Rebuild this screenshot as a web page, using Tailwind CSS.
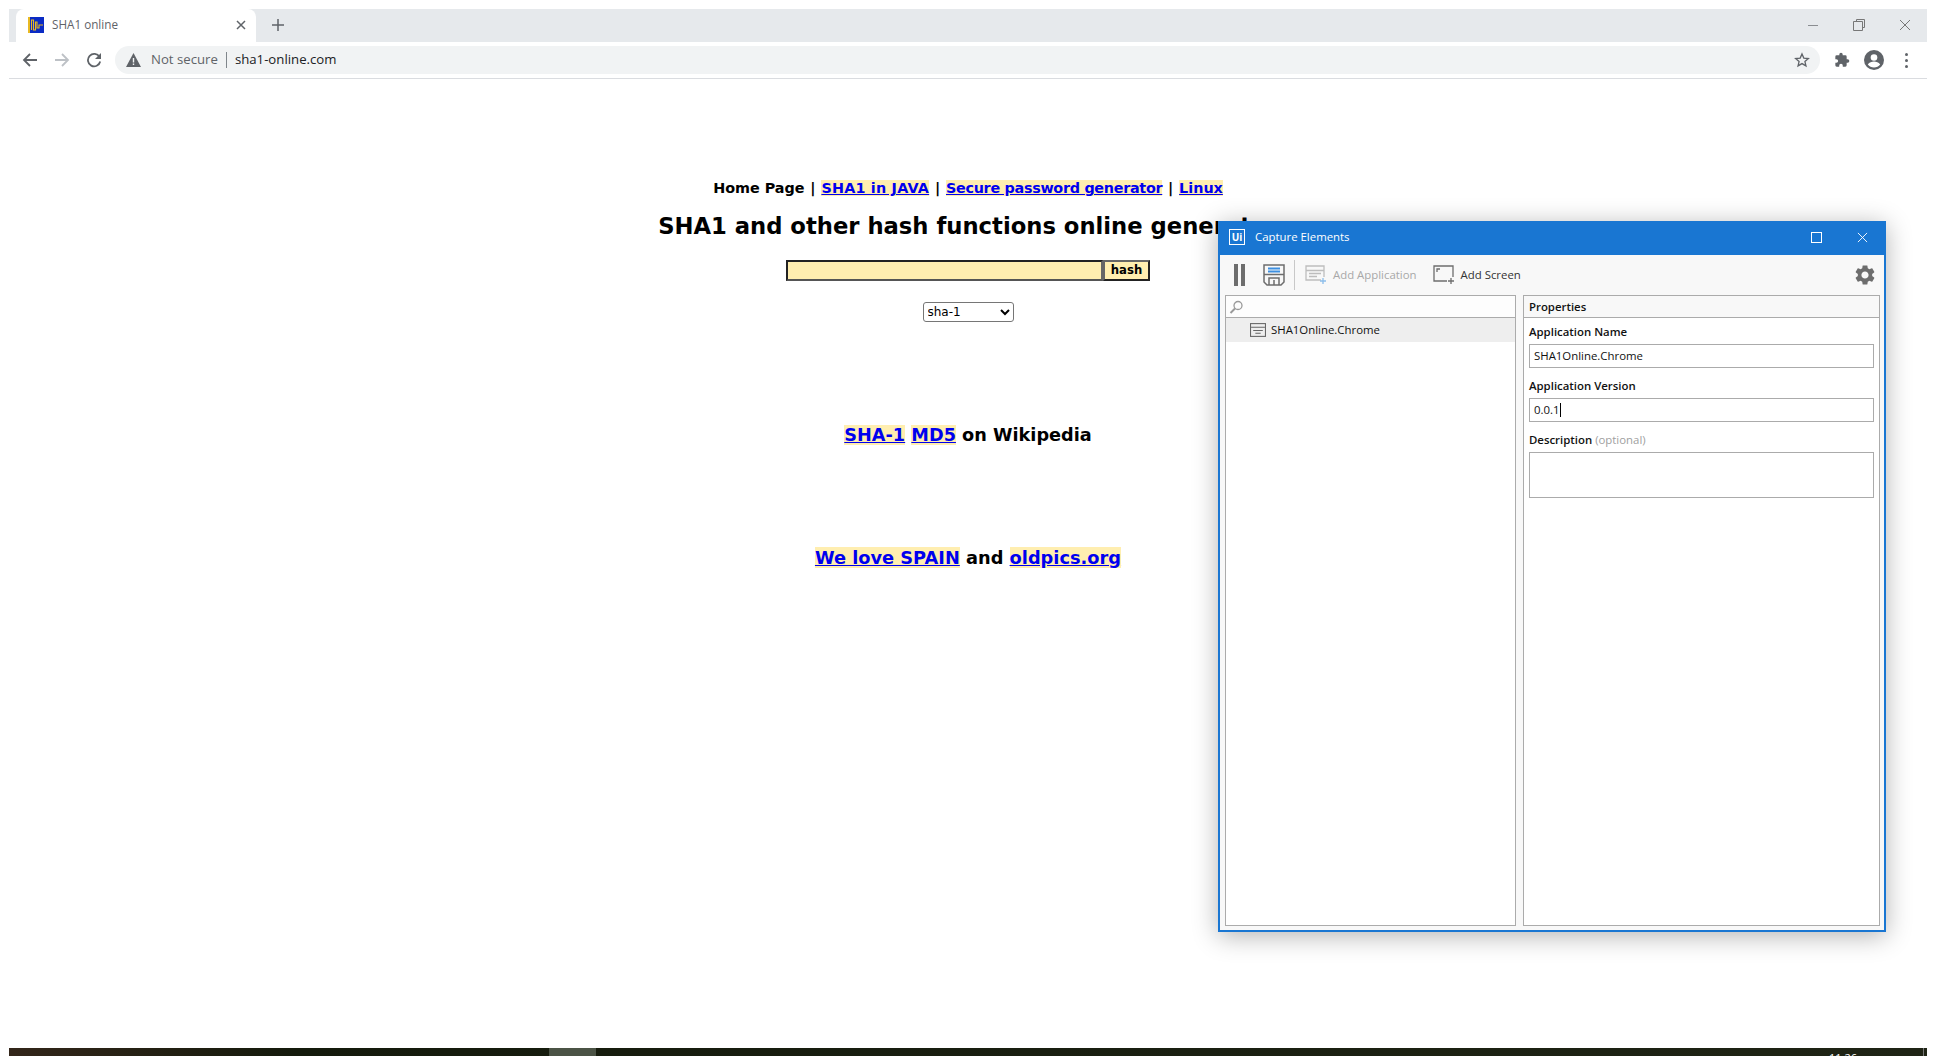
<!DOCTYPE html>
<html lang="en">

<head>
    <meta charset="UTF-8">
    <title>SHA1 online</title>
    <script src="https://cdn.jsdelivr.net/npm/@tailwindcss/browser@4"></script>
</head>

<body class="bg-white overflow-hidden">
    <div class="relative w-[1936px] h-[1056px] overflow-hidden bg-white px-[9px] pt-[9px] flex flex-col">

        <!-- browser tab strip -->
        <div class="h-[33px] shrink-0 bg-[#e6e9ec] flex items-end font-['Open_Sans',sans-serif] text-[11.700px]">
            <div class="ml-[7px] w-[240px] h-[33px] bg-white rounded-t-[8px] flex items-center pl-[12px] pr-[9px] pb-[1px]">
                <svg width="16" height="16" viewBox="0 0 16 16" class="shrink-0">
                    <rect width="16" height="16" fill="#0b2bc4" />
                    <rect width="2" height="16" fill="#e8b923" />
                    <path d="M3.500 13V3h2v10h2V5h1.500v6H11V8h4" fill="none" stroke="#e8b923" stroke-width="1.100" />
                </svg>
                <span class="ml-[8px] text-[#5f6368]">SHA1 online</span>
                <svg width="10" height="10" viewBox="0 0 10 10" class="ml-auto mr-[1px]">
                    <path d="M1 1l8 8M9 1l-8 8" stroke="#5f6368" stroke-width="1.500" />
                </svg>
            </div>
            <svg width="12" height="12" viewBox="0 0 12 12" class="ml-[16px] mb-[11px]">
                <path d="M6 0v12M0 6h12" stroke="#5f6368" stroke-width="1.500" />
            </svg>
            <div class="ml-auto h-[33px] flex items-center pb-[1px]">
                <svg width="12" height="12" viewBox="0 0 12 12"><path d="M1 6.500h10" stroke="#8a8d91" /></svg>
                <svg width="12" height="12" viewBox="0 0 12 12" class="ml-[34px]">
                    <path d="M3.500 2.500V.5h8v8h-2M.5 2.500h9v9h-9z" fill="none" stroke="#777" />
                </svg>
                <svg width="12" height="12" viewBox="0 0 12 12" class="ml-[34px] mr-[16px]">
                    <path d="M1 1l10 10M11 1L1 11" stroke="#777" />
                </svg>
            </div>
        </div>

        <!-- browser toolbar -->
        <div class="h-[37px] shrink-0 bg-white border-b border-[#dadce0] flex items-center font-['Open_Sans',sans-serif] text-[13.200px]">
            <svg width="16" height="16" viewBox="0 0 16 16" class="ml-[13px]">
                <path d="M15 8H2M8 2L2 8l6 6" fill="none" stroke="#5f6368" stroke-width="1.800" />
            </svg>
            <svg width="16" height="16" viewBox="0 0 16 16" class="ml-[16px]">
                <path d="M1 8h13M8 2l6 6-6 6" fill="none" stroke="#bdc1c6" stroke-width="1.800" />
            </svg>
            <svg width="16" height="16" viewBox="0 0 16 16" class="ml-[16px]">
                <path d="M13.500 5A6.200 6.200 0 1 0 14.200 9.500" fill="none" stroke="#5f6368" stroke-width="1.800" />
                <path d="M15 1v6H9z" fill="#5f6368" />
            </svg>
            <div class="ml-[13px] w-[1705px] h-[28px] bg-[#f1f3f4] rounded-full flex items-center pl-[11px]">
                <svg width="15" height="14" viewBox="0 0 15 14">
                    <path d="M7.500 0L15 14H0z" fill="#5f6368" />
                    <path d="M6.800 5h1.400v4.500H6.800zM6.800 10.500h1.400V12H6.800z" fill="#f1f3f4" />
                </svg>
                <span class="ml-[10px] text-[#5f6368]">Not secure</span>
                <span class="ml-[8px] w-px h-[16px] bg-[#80868b]"></span>
                <span class="ml-[8px] text-[#202124]">sha1-online.com</span>
                <svg width="16" height="16" viewBox="0 0 24 24" class="ml-auto mr-[10px]">
                    <path d="M12 3l2.700 6.200 6.800.6-5.100 4.500 1.500 6.600L12 17.400l-5.900 3.500 1.500-6.600-5.100-4.500 6.800-.6z" fill="none" stroke="#5f6368" stroke-width="2" />
                </svg>
            </div>
            <svg width="16" height="16" viewBox="0 0 24 24" class="ml-[14px]">
                <path d="M20.500 11H19V7a2 2 0 0 0-2-2h-4V3.500a2.500 2.500 0 0 0-5 0V5H4a2 2 0 0 0-2 2v3.800h1.500a2.700 2.700 0 0 1 0 5.400H2V20a2 2 0 0 0 2 2h3.800v-1.500a2.700 2.700 0 0 1 5.400 0V22H17a2 2 0 0 0 2-2v-4h1.500a2.500 2.500 0 0 0 0-5z" fill="#5f6368" />
            </svg>
            <svg width="20" height="20" viewBox="0 0 20 20" class="ml-[14px]">
                <circle cx="10" cy="10" r="10" fill="#5f6368" />
                <circle cx="10" cy="7.500" r="3.300" fill="#fff" />
                <path d="M3.800 14.500c1.500-2.300 4-3 6.200-3s4.700.7 6.200 3c-1.500 2-3.700 3-6.200 3s-4.700-1-6.200-3z" fill="#fff" />
            </svg>
            <div class="ml-[21px] flex flex-col gap-[3px]">
                <span class="w-[3px] h-[3px] bg-[#5f6368] rounded-full"></span>
                <span class="w-[3px] h-[3px] bg-[#5f6368] rounded-full"></span>
                <span class="w-[3px] h-[3px] bg-[#5f6368] rounded-full"></span>
            </div>
        </div>

        <!-- page content -->
        <main class="flex-1 flex flex-col items-center pt-[99px] font-['DejaVu_Sans',sans-serif] font-bold text-black">
            <p class="text-[14.360px] leading-[20px]">Home Page <span class="mx-[0.8px]">|</span> <a href="#" class="bg-[#ffeeb0] text-[#0000ee] underline tracking-[0.2px]">SHA1 in JAVA</a> <span class="mx-[0.8px]">|</span> <a href="#" class="bg-[#ffeeb0] text-[#0000ee] underline tracking-[-0.3px]">Secure password generator</a> <span class="mx-[0.8px]">|</span> <a href="#" class="bg-[#ffeeb0] text-[#0000ee] underline">Linux</a></p>
            <h1 class="mt-[13px] text-[22.700px] leading-[30px] font-bold">SHA1 and other hash functions online generator</h1>
            <form class="mt-[19px] flex h-[21px]">
                <input type="text" class="w-[317px] h-[21px] bg-[#ffeeb0] border-2 border-t-[#222] border-l-[#222] border-r-[#666] border-b-[#555] outline-none">
                <button type="button" class="w-[47px] h-[21px] bg-[#ffeeb0] border-2 border-t-[#666] border-l-[#666] border-r-[#222] border-b-[#222] text-[11.700px] font-bold leading-none font-['DejaVu_Sans',sans-serif]">hash</button>
            </form>
            <select class="mt-[21px] w-[91px] h-[20px] bg-white border border-[#767676] rounded-[3px] text-[12px] font-normal font-['DejaVu_Sans',sans-serif] pl-0">
                <option>sha-1</option>
            </select>
            <p class="mt-[100px] text-[17.700px] leading-[26px]"><a href="#" class="bg-[#ffeeb0] text-[#0000ee] underline">SHA-1</a> <a href="#" class="bg-[#ffeeb0] text-[#0000ee] underline">MD5</a> on Wikipedia</p>
            <p class="mt-[97px] text-[17.800px] leading-[26px]"><a href="#" class="bg-[#ffeeb0] text-[#0000ee] underline">We love SPAIN</a> and <a href="#" class="bg-[#ffeeb0] text-[#0000ee] underline">oldpics.org</a></p>
        </main>

        <!-- desktop taskbar, cut off by the screenshot -->
        <div class="relative h-[8px] shrink-0 overflow-hidden bg-gradient-to-r from-[#33261a] via-[#141a0c] via-15% to-[#1f2415]">
            <div class="absolute left-[540px] top-0 w-[47px] h-[8px] bg-[#4b5345]"></div>
            <span class="absolute left-[1820px] top-[3px] text-[11px] leading-[14px] text-white font-['Open_Sans',sans-serif]">11:26</span>
            <div class="absolute right-[3px] top-0 w-px h-[8px] bg-[#777]"></div>
        </div>

        <!-- Capture Elements window -->
        <div class="absolute left-[1218px] top-[221px] w-[668px] h-[711px] bg-[#f8f8f8] border-2 border-t-0 border-[#1976d2] shadow-[0_4px_24px_rgba(0,0,0,0.3)] flex flex-col font-['Open_Sans',sans-serif] text-[11.400px] text-[#111]">
            <div class="-mx-[2px] h-[34px] shrink-0 bg-[#1976d2] flex items-center pl-[11px] pb-[2px] text-white">
                <div class="w-[16px] h-[16px] border border-white flex items-center justify-center text-[10px] font-bold leading-none">Ui</div>
                <span class="ml-[10px]">Capture Elements</span>
                <svg width="11" height="11" viewBox="0 0 11 11" class="ml-auto">
                    <rect x=".5" y=".5" width="10" height="10" fill="none" stroke="#fff" />
                </svg>
                <svg width="11" height="11" viewBox="0 0 12 12" class="ml-[35px] mr-[18px]">
                    <path d="M1 1l10 10M11 1L1 11" stroke="#fff" />
                </svg>
            </div>
            <div class="h-[40px] shrink-0 flex items-center">
                <div class="ml-[14px] flex gap-[3px]">
                    <span class="w-[4px] h-[22px] bg-[#6d6d6d]"></span>
                    <span class="w-[4px] h-[22px] bg-[#6d6d6d]"></span>
                </div>
                <svg width="22" height="22" viewBox="0 0 22 22" class="ml-[18px]">
                    <path d="M1 1h20v17l-3 3H4l-3-3z" fill="none" stroke="#6d6d6d" stroke-width="1.500" />
                    <rect x="5" y="3.500" width="12" height="2" fill="#3d8fe0" />
                    <rect x="5" y="6.500" width="12" height="2" fill="#3d8fe0" />
                    <path d="M1 10.500h20M6 21v-7h10v7M11 16v5" fill="none" stroke="#6d6d6d" stroke-width="1.500" />
                </svg>
                <span class="ml-[9px] w-px h-[30px] bg-[#c8c8c8]"></span>
                <svg width="22" height="20" viewBox="0 0 22 20" class="ml-[10px]">
                    <path d="M16 15H1V1h18v11M1 5.500h18" fill="none" stroke="#bdbdbd" stroke-width="1.300" />
                    <path d="M4 8.500h12M4 11.500h8" stroke="#bdbdbd" stroke-width="1.300" />
                    <path d="M18 13v6M15 16h6" stroke="#8cbdea" stroke-width="1.300" />
                </svg>
                <span class="ml-[6px] text-[#a8a8a8]">Add Application</span>
                <svg width="22" height="20" viewBox="0 0 22 20" class="ml-[16px]">
                    <path d="M14 16H1V1h19v11" fill="none" stroke="#6d6d6d" stroke-width="1.300" />
                    <path d="M4 7V4h3" fill="none" stroke="#6d6d6d" stroke-width="1.300" />
                    <path d="M18 13v6M15 16h6" stroke="#6d6d6d" stroke-width="1.300" />
                </svg>
                <span class="ml-[6px] text-[#333]">Add Screen</span>
                <svg width="24" height="24" viewBox="0 0 24 24" class="ml-auto mr-[7px]">
                    <path d="M19.140 12.940c.04-.3.06-.61.06-.94 0-.32-.02-.64-.07-.94l2.030-1.580c.18-.14.23-.41.12-.61l-1.920-3.320c-.12-.22-.37-.29-.59-.22l-2.390.96c-.5-.38-1.030-.7-1.620-.94l-.36-2.540c-.04-.24-.24-.41-.48-.41h-3.840c-.24 0-.43.17-.47.41l-.36 2.540c-.59.24-1.130.57-1.620.94l-2.390-.96c-.22-.08-.47 0-.59.22L2.740 8.870c-.12.21-.08.47.12.61l2.030 1.580c-.05.3-.09.63-.09.94s.02.64.07.94l-2.030 1.580c-.18.14-.23.41-.12.61l1.920 3.320c.12.22.37.29.59.22l2.390-.96c.5.38 1.030.7 1.620.94l.36 2.540c.05.24.24.41.48.41h3.840c.24 0 .44-.17.47-.41l.36-2.540c.59-.24 1.130-.56 1.620-.94l2.390.96c.22.08.47 0 .59-.22l1.920-3.320c.12-.22.07-.47-.12-.61l-2.010-1.580zM12 15.600c-1.980 0-3.600-1.620-3.600-3.600s1.620-3.600 3.600-3.600 3.600 1.620 3.600 3.600-1.620 3.600-3.600 3.600z" fill="#6d6d6d" />
                </svg>
            </div>
            <div class="flex-1 flex pl-[5px] pr-[4px] pb-[4px] gap-[7px] min-h-0">
                <div class="w-[291px] bg-white border border-[#ababab] flex flex-col">
                    <div class="h-[22px] bg-[#fdfdfd] border-b border-[#ababab] flex items-center pl-[3px]">
                        <svg width="15" height="14" viewBox="0 0 14 14">
                            <circle cx="8.500" cy="5.500" r="4" fill="none" stroke="#9a9a9a" stroke-width="1.300" />
                            <path d="M5.500 8.500L1 13" stroke="#9a9a9a" stroke-width="2" />
                        </svg>
                    </div>
                    <div class="h-[24px] bg-[#eeeeee] flex items-center pl-[24px]">
                        <svg width="16" height="14" viewBox="0 0 15 13">
                            <rect x=".5" y=".5" width="14" height="12" fill="none" stroke="#666" />
                            <path d="M1 4h13M3 7h9M5 9.500h5" stroke="#666" />
                        </svg>
                        <span class="ml-[5px]">SHA1Online.Chrome</span>
                    </div>
                </div>
                <div class="flex-1 bg-white border border-[#ababab] flex flex-col">
                    <div class="h-[22px] shrink-0 bg-[#f8f8f8] border-b border-[#ababab] flex items-center pl-[5px] font-semibold">Properties</div>
                    <div class="px-[5px]">
                        <label class="block mt-[4px] mb-[3px] leading-[19px] font-semibold">Application Name</label>
                        <div class="h-[24px] border border-[#ababab] flex items-center pl-[4px] pb-[1px] bg-white">SHA1Online.Chrome</div>
                        <label class="block mt-[8px] mb-[3px] leading-[19px] font-semibold">Application Version</label>
                        <div class="h-[24px] border border-[#ababab] flex items-center pl-[4px] pb-[1px] bg-white">0.0.1<span class="w-px h-[14px] bg-black"></span></div>
                        <label class="block mt-[8px] mb-[3px] leading-[19px] font-semibold">Description <span class="font-normal text-[#a0a0a0]">(optional)</span></label>
                        <div class="h-[46px] border border-[#ababab] bg-white"></div>
                    </div>
                </div>
            </div>
        </div>
    </div>
</body>

</html>
